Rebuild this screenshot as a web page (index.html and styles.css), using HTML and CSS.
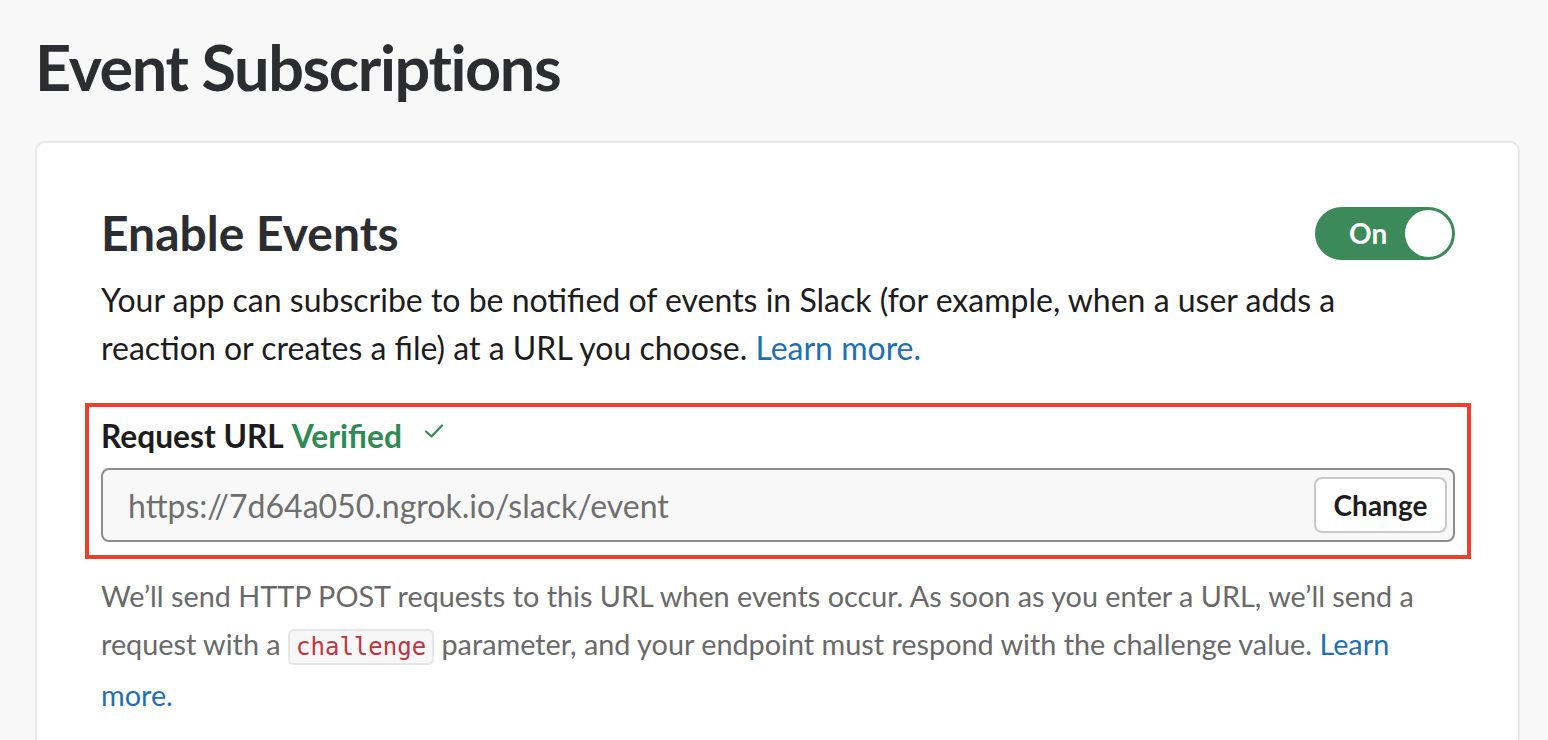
FILE: index.html
```html
<!DOCTYPE html>
<html lang="en">
<head>
<meta charset="utf-8">
<title>Event Subscriptions</title>
<link rel="stylesheet" href="styles.css">
</head>
<body>
<main class="page">
  <h1 class="page-title">Event Subscriptions</h1>
  <section class="card">
    <div class="card-head">
      <h2 class="card-title">Enable Events</h2>
      <button class="toggle" type="button" aria-pressed="true">
        <span class="toggle-label">On</span>
        <span class="toggle-knob"></span>
      </button>
    </div>
    <p class="intro">Your app can subscribe to be notified of events in Slack (for example, when a user adds a reaction or creates a file) at a URL you choose. <a class="link" href="#">Learn more.</a></p>
    <div class="highlight">
      <div class="field-label">Request URL <span class="verified">Verified</span>
        <svg class="check" viewBox="0 0 20 16" width="20" height="16" aria-hidden="true"><path d="M2 8.5 L7.5 13.5 L18 2.5" fill="none" stroke="#2f8a54" stroke-width="2.2" stroke-linecap="round" stroke-linejoin="round"/></svg>
      </div>
      <div class="url-input">
        <span class="url-text">https://7d64a050.ngrok.io/slack/event</span>
        <button class="change-btn" type="button">Change</button>
      </div>
    </div>
    <p class="help">We’ll send HTTP POST requests to this URL when events occur. As soon as you enter a URL, we’ll send a request with a <code class="code">challenge</code> parameter, and your endpoint must respond with the challenge value. <a class="link" href="#">Learn more.</a></p>
  </section>
</main>
</body>
</html>
```

FILE: styles.css
```css
html, body {
  margin: 0;
  padding: 0;
  background: #f8f8f8;
  height: 100%;
  overflow: hidden;
}

body {
  font-family: Lato, "Noto Sans", sans-serif;
  color: #1d1c1d;
}

.page {
  padding: 28px 28px 0 35px;
}

.page-title {
  margin: 0;
  font-size: 63px;
  line-height: 77px;
  font-weight: 700;
  color: #2c2d30;
  letter-spacing: -1.4px;
}

.card {
  margin-top: 36px;
  width: 1485px;
  box-sizing: border-box;
  background: #fff;
  border: 2px solid #e8e8e8;
  border-radius: 10px;
  padding: 62px 63px 40px 64px;
  height: 700px;
}

.card-head {
  display: flex;
  align-items: center;
  justify-content: space-between;
}

.card-title {
  margin: 0;
  font-size: 48px;
  line-height: 56px;
  font-weight: 700;
  color: #2c2d30;
}

.toggle {
  display: flex;
  align-items: center;
  justify-content: space-between;
  width: 140px;
  height: 53px;
  padding: 0 3px 0 34px;
  box-sizing: border-box;
  border: none;
  border-radius: 27px;
  background: #3c8a5a;
  cursor: pointer;
  font-family: inherit;
}

.toggle-label {
  color: #fff;
  font-size: 28px;
  font-weight: 700;
}

.toggle-knob {
  width: 47px;
  height: 47px;
  border-radius: 50%;
  background: #fff;
}

.intro {
  margin: 15px 0 0;
  font-size: 32px;
  line-height: 48px;
  color: #1d1c1d;
  max-width: 1300px;
}

.link {
  color: #1f6fb3;
  text-decoration: none;
}

.highlight {
  margin: 31px -16px 0;
  border: 4px solid #e8412c;
  padding: 9px 12px 13px 12px;
}

.field-label {
  font-size: 31.7px;
  line-height: 40px;
  font-weight: 700;
  color: #1d1c1d;
  display: flex;
  align-items: center;
  gap: 8px;
}

.verified {
  color: #2f8a54;
}

.check {
  margin-left: 14px;
  margin-top: -10px;
}

.url-input {
  margin-top: 12px;
  height: 74px;
  box-sizing: border-box;
  display: flex;
  align-items: center;
  justify-content: space-between;
  border: 2px solid #8d8d8d;
  border-radius: 8px;
  background: #f8f8f8;
  padding: 0 6px 0 25px;
}

.url-text {
  font-size: 32px;
  color: #6f6f6f;
}

.change-btn {
  height: 56px;
  width: 133px;
  border: 2px solid #c8c8c8;
  border-radius: 8px;
  background: #fff;
  font-family: inherit;
  font-size: 28px;
  font-weight: 700;
  color: #1d1c1d;
  cursor: pointer;
}

.help {
  margin: 13px 0 0;
  font-size: 28.8px;
  line-height: 48px;
  color: #696969;
  max-width: 1340px;
}

.code {
  font-family: "DejaVu Sans Mono", "Liberation Mono", monospace;
  font-size: 24px;
  color: #c4333e;
  background: #f7f7f7;
  border: 2px solid #e6e6e6;
  border-radius: 6px;
  padding: 2px 6px;
}
```
